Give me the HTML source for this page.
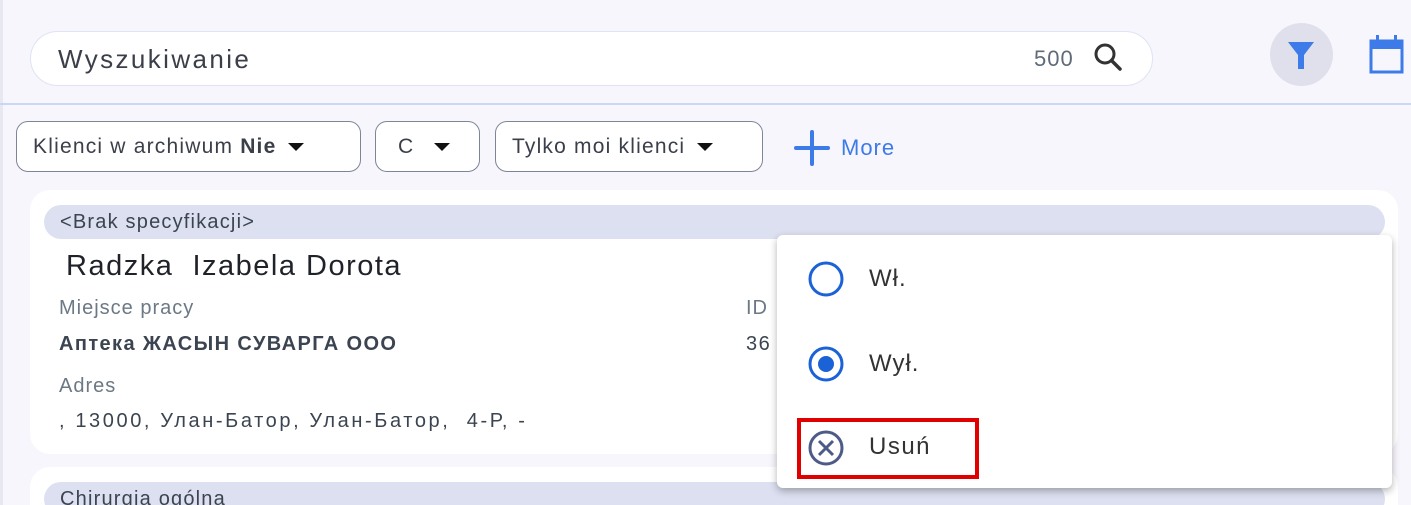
<!DOCTYPE html>
<html><head><meta charset="utf-8"><style>
*{margin:0;padding:0;box-sizing:border-box}
html,body{width:1411px;height:505px;overflow:hidden}
body{background:#f7f6fc;font-family:"Liberation Sans",sans-serif;position:relative;color:#3b3f4a}
.a{position:absolute;white-space:nowrap}
.search{left:30px;top:31px;width:1123px;height:55px;background:#fff;border:1px solid #dfe3f3;border-radius:28px}
.chip{top:121px;height:51px;border:1.5px solid #7d8699;border-radius:12px;background:#fff;font-size:21px;display:flex;align-items:center;padding-left:16px;color:#3b3f4a;letter-spacing:1.2px}
.tri{display:inline-block;width:0;height:0;border-left:8px solid transparent;border-right:8px solid transparent;border-top:8px solid #111;margin-left:12px}
.card{background:#fff;border-radius:20px}
.hdr{background:#dde0f0;border-radius:17px;font-size:20px;color:#3b4450;padding-left:16px;letter-spacing:1.2px}
.lbl{font-size:20px;color:#6b7885;letter-spacing:1px}
.val{font-size:20px;color:#3b4450;letter-spacing:1.5px}
</style></head><body>
<div class="a" style="left:0;top:0;width:3px;height:505px;background:#e8e8f0"></div>
<div class="a search"></div>
<div class="a" style="left:58px;top:44px;font-size:26px;color:#3b3f4a;letter-spacing:2.4px">Wyszukiwanie</div>
<div class="a" style="left:1034px;top:46px;font-size:22px;color:#5f6b78;letter-spacing:1px">500</div>
<svg class="a" style="left:1092px;top:41px" width="34" height="34" viewBox="0 0 34 34"><circle cx="13" cy="13" r="9" fill="none" stroke="#333" stroke-width="3"/><line x1="19.5" y1="19.5" x2="28" y2="28" stroke="#333" stroke-width="3.5" stroke-linecap="round"/></svg>
<div class="a" style="left:1270px;top:23px;width:63px;height:63px;border-radius:50%;background:#dfe0eb"></div>
<svg class="a" style="left:1286px;top:40px" width="30" height="30" viewBox="0 0 30 30"><path d="M2 2h26L18 15v14h-6V15Z" fill="#3d7be8"/></svg>
<svg class="a" style="left:1368px;top:35px" width="43" height="40" viewBox="0 0 43 40"><rect x="3" y="6" width="31" height="31" fill="none" stroke="#3d7be8" stroke-width="3"/><rect x="3" y="6" width="31" height="8" fill="#3d7be8"/><rect x="8" y="0" width="3" height="8" fill="#3d7be8"/><rect x="26" y="0" width="3" height="8" fill="#3d7be8"/></svg>
<div class="a" style="left:0;top:103px;width:1411px;height:2px;background:#c9d8f6"></div>
<div class="a chip" style="left:16px;width:345px">Klienci w archiwum&nbsp;<b>Nie</b><span class="tri"></span></div>
<div class="a chip" style="left:375px;width:105px;padding-left:22px">C<span class="tri" style="margin-left:20px"></span></div>
<div class="a chip" style="left:495px;width:268px">Tylko moi klienci<span class="tri"></span></div>
<svg class="a" style="left:794px;top:130px" width="36" height="36" viewBox="0 0 36 36"><path d="M18 2v32M2 18h32" stroke="#3d7be8" stroke-width="4" stroke-linecap="round"/></svg>
<div class="a" style="left:841px;top:135px;font-size:22px;color:#3d7be8;letter-spacing:1px">More</div>
<div class="a card" style="left:30px;top:190px;width:1368px;height:264px"></div>
<div class="a hdr" style="left:44px;top:205px;width:1341px;height:34px;line-height:34px">&lt;Brak specyfikacji&gt;</div>
<div class="a" style="left:66px;top:250px;font-size:29px;color:#1f2228;letter-spacing:1.5px">Radzka&nbsp; Izabela Dorota</div>
<div class="a lbl" style="left:59px;top:297px">Miejsce pracy</div>
<div class="a val" style="left:59px;top:333px;font-weight:bold;letter-spacing:1.4px">Аптека ЖАСЫН СУВАРГА ООО</div>
<div class="a lbl" style="left:59px;top:375px">Adres</div>
<div class="a val" style="left:59px;top:410px;letter-spacing:2.6px">, 13000, Улан-Батор, Улан-Батор,&nbsp; 4-Р, -</div>
<div class="a lbl" style="left:746px;top:297px">ID</div>
<div class="a val" style="left:746px;top:333px">36</div>
<div class="a card" style="left:30px;top:467px;width:1368px;height:60px"></div>
<div class="a hdr" style="left:44px;top:482px;width:1341px;height:34px;line-height:34px">Chirurgia ogólna</div>
<div class="a" style="left:777px;top:235px;width:615px;height:253px;background:#fff;border-radius:6px;box-shadow:0 3px 8px rgba(0,0,0,0.3)"></div>
<svg class="a" style="left:806px;top:259px" width="40" height="40"><circle cx="20" cy="20" r="16" fill="none" stroke="#1a62d6" stroke-width="3"/></svg>
<div class="a" style="left:869px;top:265px;font-size:24px;color:#333;letter-spacing:1px">Wł.</div>
<svg class="a" style="left:806px;top:344px" width="40" height="40"><circle cx="20" cy="20" r="16" fill="none" stroke="#1a62d6" stroke-width="3"/><circle cx="20" cy="20" r="8" fill="#1a62d6"/></svg>
<div class="a" style="left:869px;top:350px;font-size:24px;color:#333;letter-spacing:1px">Wył.</div>
<div class="a" style="left:797px;top:418px;width:182px;height:61px;border:4px solid #e00000"></div>
<svg class="a" style="left:806px;top:428px" width="40" height="40"><circle cx="20" cy="20" r="16" fill="none" stroke="#4e5b86" stroke-width="3"/><path d="M13 13l14 14M27 13L13 27" stroke="#4e5b86" stroke-width="3"/></svg>
<div class="a" style="left:869px;top:433px;font-size:24px;color:#333;letter-spacing:1.5px">Usuń</div>
</body></html>
